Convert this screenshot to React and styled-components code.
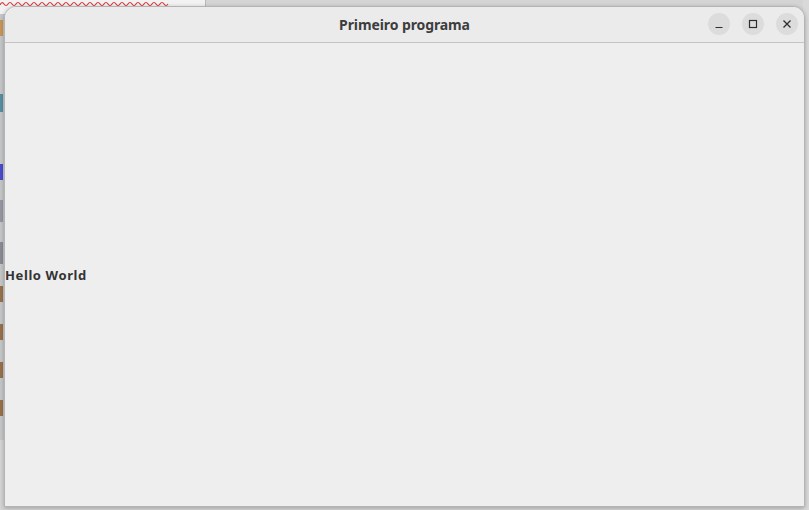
import React from 'react'
import styled, { createGlobalStyle } from 'styled-components'

const GlobalStyle = createGlobalStyle`
  html, body {
    margin: 0;
    padding: 0;
    width: 809px;
    height: 510px;
    overflow: hidden;
  }
  body {
    font-family: "Noto Sans", "DejaVu Sans", sans-serif;
  }
`

const Desktop = styled.div`
  position: relative;
  width: 809px;
  height: 510px;
  background: #d4d4d4;
  overflow: hidden;
  display: flex;
`

// the editor window that peeks out from behind the app window
const EditorBehind = styled.div`
  width: 205px;
  height: 440px;
  background: #c4c6c8;
  border-right: 1px solid #b8b8b8;
  display: flex;
  flex-direction: column;
`

const EditorTop = styled.div`
  height: 14px;
  flex: 0 0 14px;
  background: #f2f2f2;
  padding-top: 1px;
  box-sizing: border-box;

  svg {
    display: block;
  }
`

const CodeLines = styled.div`
  display: flex;
  flex-direction: column;
  gap: ${p => p.gap}px;
  padding-top: ${p => p.pad}px;
`

const Glyph = styled.div`
  width: 3px;
  height: ${p => p.h}px;
  background: ${p => p.c};
  opacity: 0.8;
`

const Spacer = styled.div`
  flex: 1;
`

const RightStrip = styled.div`
  width: 6px;
  background: #d9d9d9;
`

const Window = styled.div`
  position: absolute;
  left: 4px;
  top: 6px;
  width: 799px;
  height: 499px;
  display: flex;
  flex-direction: column;
  background: #eeeeee;
  border: 1px solid #b4b4b4;
  border-radius: 12px 12px 0 0;
  box-shadow: 0 1px 4px rgba(0, 0, 0, 0.25);
  overflow: hidden;
`

const HeaderBar = styled.div`
  position: relative;
  height: 35px;
  flex: 0 0 35px;
  display: flex;
  align-items: center;
  justify-content: center;
  background: #ebebeb;
  border-bottom: 1px solid #c4c4c4;
`

const Title = styled.div`
  font-size: 14px;
  font-weight: 700;
  color: #3d3d3d;
  letter-spacing: -0.1px;
`

const Controls = styled.div`
  position: absolute;
  right: 6px;
  top: 6px;
  display: flex;
  gap: 12px;
`

const CtlButton = styled.div`
  width: 22px;
  height: 22px;
  border-radius: 50%;
  background: #dcdcdc;
  display: flex;
  align-items: center;
  justify-content: center;
  color: #2e2e2e;
`

const Body = styled.div`
  flex: 1;
  display: flex;
  align-items: center;
`

const Label = styled.div`
  font-size: 13px;
  font-weight: 700;
  color: #333333;
  letter-spacing: 0.6px;
  margin-top: 1px;
`

function squigglePath(width) {
  let d = 'M0 4'
  for (let x = 0; x < width; x += 8) {
    d += ` Q${x + 2} 0 ${x + 4} 3 T${x + 8} 3`
  }
  return d
}

export default function App() {
  return (
    <>
      <GlobalStyle />
      <Desktop>
        <EditorBehind>
          <EditorTop>
            <svg width="170" height="8">
              <path d={squigglePath(168)} fill="none" stroke="#d83a3a" strokeWidth="1.2" />
            </svg>
          </EditorTop>
          <CodeLines gap={58} pad={6}>
            <Glyph h={16} c="#c98a3a" />
            <Glyph h={18} c="#3c7f96" />
          </CodeLines>
          <CodeLines gap={20} pad={52}>
            <Glyph h={16} c="#2a2ad0" />
            <Glyph h={22} c="#8a8a96" />
            <Glyph h={22} c="#7a7a86" />
          </CodeLines>
          <CodeLines gap={22} pad={22}>
            <Glyph h={16} c="#8b5a2b" />
            <Glyph h={16} c="#8b5a2b" />
            <Glyph h={16} c="#8b5a2b" />
            <Glyph h={16} c="#8b5a2b" />
          </CodeLines>
          <Spacer />
        </EditorBehind>
        <Spacer />
        <RightStrip />
        <Window>
          <HeaderBar>
            <Title>Primeiro programa</Title>
            <Controls>
              <CtlButton>
                <svg width="10" height="10" viewBox="0 0 10 10">
                  <path d="M1.5 8.5h7" stroke="currentColor" strokeWidth="1.2" />
                </svg>
              </CtlButton>
              <CtlButton>
                <svg width="10" height="10" viewBox="0 0 10 10">
                  <rect x="1.5" y="1.5" width="7" height="7" fill="none" stroke="currentColor" strokeWidth="1.2" />
                </svg>
              </CtlButton>
              <CtlButton>
                <svg width="10" height="10" viewBox="0 0 10 10">
                  <path d="M1.5 1.5l7 7M8.5 1.5l-7 7" stroke="currentColor" strokeWidth="1.3" />
                </svg>
              </CtlButton>
            </Controls>
          </HeaderBar>
          <Body>
            <Label>Hello World</Label>
          </Body>
        </Window>
      </Desktop>
    </>
  )
}
